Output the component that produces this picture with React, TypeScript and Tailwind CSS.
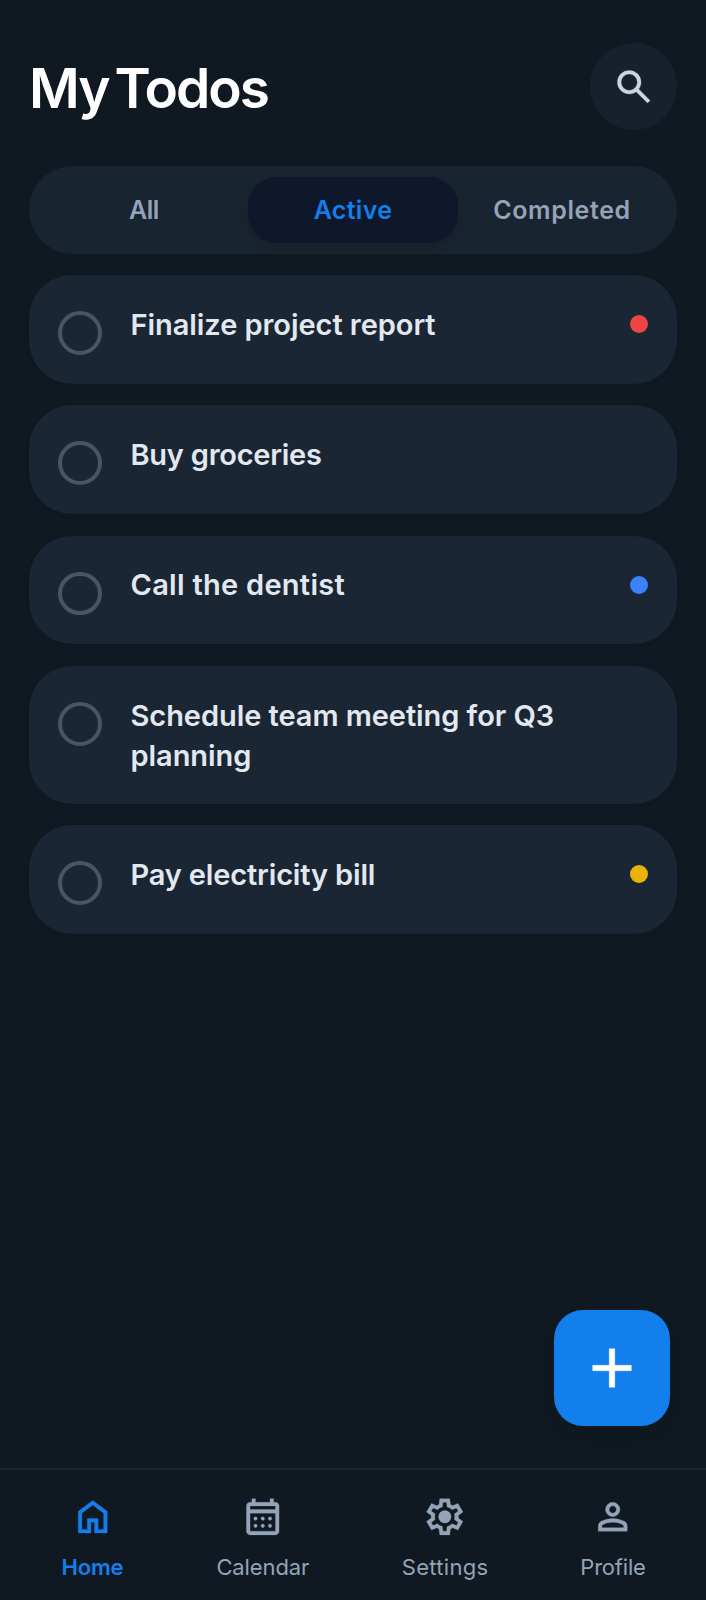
import type { ReactNode } from 'react';

const ICONS = {
  search:
    'M19.6 21 13.3 14.7q-.75.6-1.725.95T9.5 16q-2.725 0-4.612-1.888T3 9.5t1.888-4.612T9.5 3t4.613 1.888T16 9.5q0 1.1-.35 2.075T14.7 13.3l6.3 6.3-1.4 1.4ZM9.5 14q1.875 0 3.188-1.312T14 9.5t-1.312-3.187T9.5 5 6.313 6.313 5 9.5t1.313 3.188T9.5 14Z',
  add: 'M11 19v-6H5v-2h6V5h2v6h6v2h-6v6h-2Z',
  home: 'M6 19h3v-6h6v6h3v-9l-6-4.5L6 10v9Zm-2 2V9l8-6 8 6v12h-7v-6h-2v6H4Z',
  calendar:
    'M5 22q-.825 0-1.412-.587T3 20V6q0-.825.588-1.412T5 4h1V2h2v2h8V2h2v2h1q.825 0 1.413.588T21 6v14q0 .825-.587 1.413T19 22H5Zm0-2h14V10H5v10ZM5 8h14V6H5v2ZM7 13a1 1 0 1 0 2 0a1 1 0 1 0-2 0ZM11 13a1 1 0 1 0 2 0a1 1 0 1 0-2 0ZM15 13a1 1 0 1 0 2 0a1 1 0 1 0-2 0ZM7 17a1 1 0 1 0 2 0a1 1 0 1 0-2 0ZM11 17a1 1 0 1 0 2 0a1 1 0 1 0-2 0ZM15 17a1 1 0 1 0 2 0a1 1 0 1 0-2 0Z',
  settings:
    'm9.25 22-.4-3.2q-.325-.125-.612-.3t-.563-.375L4.7 19.375l-2.75-4.75 2.575-1.95Q4.5 12.5 4.5 12.337v-.675q0-.162.025-.337L1.95 9.375l2.75-4.75 2.975 1.25q.275-.2.575-.375t.6-.3l.4-3.2h5.5l.4 3.2q.325.125.613.3t.562.375l2.975-1.25 2.75 4.75-2.575 1.95q.025.175.025.338v.674q0 .163-.05.338l2.575 1.95-2.75 4.75-2.95-1.25q-.275.2-.575.375t-.6.3l-.4 3.2h-5.5ZM11 20h1.975l.35-2.65q.775-.2 1.438-.587t1.212-.938l2.475 1.025.975-1.7-2.15-1.625q.125-.35.175-.737T17.5 12q0-.4-.05-.787t-.175-.738l2.15-1.625-.975-1.7-2.475 1.05q-.55-.575-1.212-.962t-1.438-.588L13 4h-1.975l-.35 2.65q-.775.2-1.437.588t-1.213.937L5.55 7.15l-.975 1.7 2.15 1.6q-.125.375-.175.75t-.05.8q0 .4.05.775t.175.75l-2.15 1.625.975 1.7 2.475-1.05q.55.575 1.213.963t1.437.587L11 20ZM12.05 15.5q1.45 0 2.475-1.025T15.55 12t-1.025-2.475T12.05 8.5q-1.475 0-2.488 1.025T8.55 12t1.012 2.475T12.05 15.5Z',
  profile:
    'M12 12q-1.65 0-2.825-1.175T8 8t1.175-2.825T12 4t2.825 1.175T16 8t-1.175 2.825T12 12Zm-8 8v-2.8q0-.85.438-1.562T5.6 14.55q1.55-.775 3.15-1.163T12 13t3.25.387 3.15 1.163q.725.375 1.162 1.088T20 17.2V20H4Zm2-2h12v-.8q0-.275-.137-.5t-.363-.35q-1.35-.675-2.725-1.013T12 15t-2.775.338T6.5 16.35q-.225.125-.363.35T6 17.2v.8Zm6-8q.825 0 1.413-.588T14 8t-.587-1.413T12 6t-1.413.588T10 8t.588 1.413T12 10Z',
};

function Icon({ name, className }: { name: keyof typeof ICONS; className: string }) {
  return (
    <svg
      viewBox="0 0 24 24"
      fill="currentColor"
      fillRule="evenodd"
      stroke="currentColor"
      strokeWidth={0.16}
      aria-hidden="true"
      className={className}
    >
      <path d={ICONS[name]} />
    </svg>
  );
}

type Todo = { title: ReactNode; dot?: string; tracking: string };

const todos: Todo[] = [
  { title: 'Finalize project report', dot: 'bg-[#ef4444]', tracking: 'tracking-[-0.06px]' },
  { title: 'Buy groceries', tracking: 'tracking-[-0.25px]' },
  { title: 'Call the dentist', dot: 'bg-[#3b82f6]', tracking: 'tracking-[0.28px]' },
  { title: 'Schedule team meeting for Q3 planning', tracking: 'tracking-[-0.06px]' },
  { title: 'Pay electricity bill', dot: 'bg-[#eab308]', tracking: 'tracking-[-0.16px]' },
];

function TodoCard({ title, dot, tracking }: Todo) {
  return (
    <li className="flex min-h-[108.7px] items-start rounded-[43.5px] bg-[#1b2634] px-[29px] pt-[29.5px] pb-[28px] shadow-[0_2px_4px_rgba(0,0,0,0.06)]">
      <button aria-label="Mark as done" className="mt-[6.5px] size-[43.5px] shrink-0 rounded-full border-4 border-[#475569]" />
      <p className={`ml-[29px] w-[440px] text-[29px] leading-[40px] font-semibold text-[#e2e8f0] ${tracking}`}>{title}</p>
      {dot && <span className={`mt-[10.5px] ml-auto size-[18px] shrink-0 rounded-full ${dot}`} />}
    </li>
  );
}

function NavItem({ icon, label, width, text }: { icon: keyof typeof ICONS; label: string; width: string; text: string }) {
  return (
    <a className={`flex flex-col items-center ${width} ${text}`}>
      <Icon name={icon} className="size-[43.5px]" />
      <span className="mt-[14px] text-[22px] leading-[29px] whitespace-nowrap">{label}</span>
    </a>
  );
}

export default function App() {
  return (
    <div className="relative flex h-[1600px] w-[706px] flex-col overflow-hidden bg-[#101921] font-['Inter',sans-serif]">
      <header className="flex items-center justify-between pt-[43px] pr-[29px] pl-[29px]">
        <h1 className="mt-[2px] text-[55px] leading-[68px] font-semibold tracking-[-2px] text-white [word-spacing:-6px]">My Todos</h1>
        <button aria-label="Search" className="flex size-[87px] items-center justify-center rounded-full bg-[#17212d] text-[#cbd5e1]">
          <Icon name="search" className="size-[43.5px]" />
        </button>
      </header>

      <div className="mx-[29px] mt-[36px] flex h-[87.5px] items-stretch rounded-full bg-[#192431] p-[11px] text-[25px] font-semibold text-[#94a3b8]">
        <button className="w-[208px] pt-px tracking-[-0.5px]">All</button>
        <button className="w-[210px] rounded-[29px] bg-[#0f172a] pt-px text-[#137fec] shadow-[0_4px_10px_rgba(0,0,0,0.12)] tracking-[0.3px]">Active</button>
        <button className="w-[208px] pt-px tracking-[0.62px]">Completed</button>
      </div>

      <ul className="mx-[29px] mt-[21.5px] flex flex-col gap-[21.7px]">
        {todos.map((todo, i) => (
          <TodoCard key={i} {...todo} />
        ))}
      </ul>

      <button aria-label="Add todo" className="absolute top-[1310px] left-[554px] flex size-[116px] items-center justify-center rounded-[29px] bg-[#137fec] text-white shadow-[0_8px_16px_rgba(0,0,0,0.06)]">
        <Icon name="add" className="size-[66px]" />
      </button>

      <nav className="mt-auto flex h-[132px] items-start justify-between border-t-[2px] border-[#1a2530] pr-[60px] pl-[61px] pt-[25px]">
        <NavItem icon="home" label="Home" width="w-[63px]" text="font-semibold text-[#137fec] tracking-[-0.2px]" />
        <NavItem icon="calendar" label="Calendar" width="w-[95px]" text="font-normal text-[#94a3b8] tracking-[-0.1px]" />
        <NavItem icon="settings" label="Settings" width="w-[87px]" text="font-normal text-[#94a3b8] tracking-[0.3px]" />
        <NavItem icon="profile" label="Profile" width="w-[66px]" text="font-normal text-[#94a3b8] tracking-[-0.2px]" />
      </nav>
    </div>
  );
}
